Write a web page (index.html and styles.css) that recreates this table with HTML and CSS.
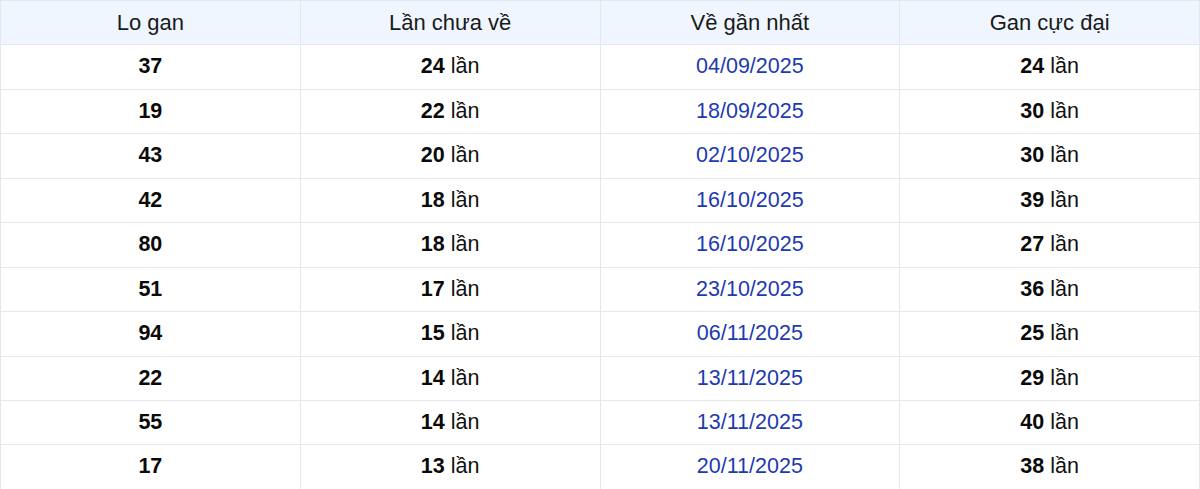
FILE: index.html
```html
<!DOCTYPE html>
<html lang="vi">
<head>
<meta charset="utf-8">
<title>Lo gan</title>
<link rel="stylesheet" href="styles.css">
</head>
<body>
<table class="gan-table">
  <thead>
    <tr>
      <th>Lo gan</th>
      <th>Lần chưa về</th>
      <th>Về gần nhất</th>
      <th>Gan cực đại</th>
    </tr>
  </thead>
  <tbody>
    <tr><td class="num">37</td><td><b>24</b> lần</td><td class="date">04/09/2025</td><td><b>24</b> lần</td></tr>
    <tr><td class="num">19</td><td><b>22</b> lần</td><td class="date">18/09/2025</td><td><b>30</b> lần</td></tr>
    <tr><td class="num">43</td><td><b>20</b> lần</td><td class="date">02/10/2025</td><td><b>30</b> lần</td></tr>
    <tr><td class="num">42</td><td><b>18</b> lần</td><td class="date">16/10/2025</td><td><b>39</b> lần</td></tr>
    <tr><td class="num">80</td><td><b>18</b> lần</td><td class="date">16/10/2025</td><td><b>27</b> lần</td></tr>
    <tr><td class="num">51</td><td><b>17</b> lần</td><td class="date">23/10/2025</td><td><b>36</b> lần</td></tr>
    <tr><td class="num">94</td><td><b>15</b> lần</td><td class="date">06/11/2025</td><td><b>25</b> lần</td></tr>
    <tr><td class="num">22</td><td><b>14</b> lần</td><td class="date">13/11/2025</td><td><b>29</b> lần</td></tr>
    <tr><td class="num">55</td><td><b>14</b> lần</td><td class="date">13/11/2025</td><td><b>40</b> lần</td></tr>
    <tr><td class="num">17</td><td><b>13</b> lần</td><td class="date">20/11/2025</td><td><b>38</b> lần</td></tr>
  </tbody>
</table>
</body>
</html>
```

FILE: styles.css
```css
html, body {
  margin: 0;
  padding: 0;
  background: #ffffff;
}

body {
  font-family: "Liberation Sans", Arial, sans-serif;
  color: #111111;
}

.gan-table {
  width: 1200px;
  border-collapse: collapse;
  table-layout: fixed;
  font-size: 21.5px;
}

.gan-table th,
.gan-table td {
  border: 1px solid #e5e7eb;
  padding: 10px 8px;
  text-align: center;
  line-height: 23.44px;
}

.gan-table th {
  background: #eff6ff;
  font-weight: 400;
  font-size: 22px;
  color: #1a1a1a;
}

.gan-table td {
  color: #111111;
}

.gan-table td b,
.gan-table td.num {
  font-weight: 700;
  color: #0a0a0a;
}

.gan-table td.date {
  color: #1d3ab0;
}
```
